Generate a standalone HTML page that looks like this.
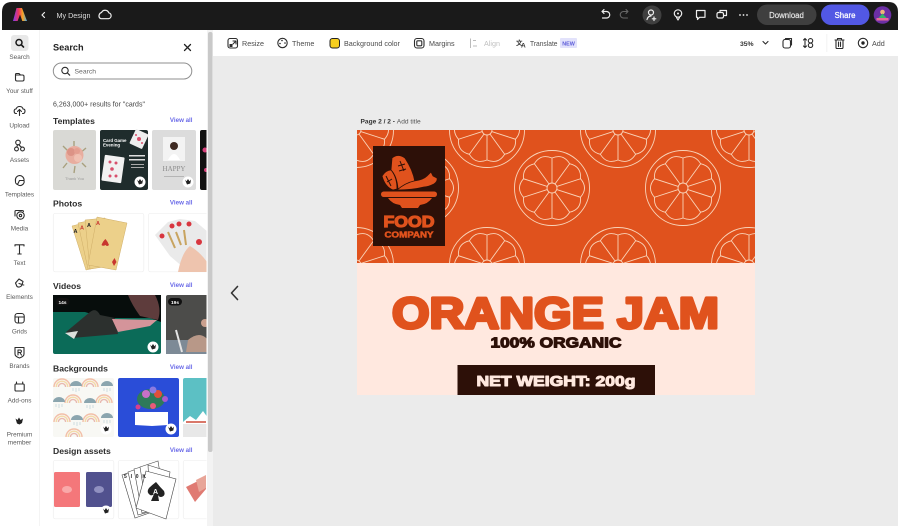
<!DOCTYPE html>
<html><head><meta charset="utf-8"><style>
html,body{margin:0;padding:0;background:#fff;width:900px;height:528px;overflow:hidden}
svg{display:block}
text{font-family:"Liberation Sans","Noto Sans CJK SC",sans-serif}
.nl{font-size:6.4px;fill:#5a5a5a;text-anchor:middle}
.h{font-size:8.6px;font-weight:bold;fill:#2c2c2c}
.va{font-size:6.2px;font-weight:bold;fill:#6a6ae8;text-anchor:end}
.tb{font-size:7.2px;fill:#4b4b4b}
.ic{fill:none;stroke:#2c2c2c;stroke-width:1.1;stroke-linecap:round;stroke-linejoin:round}
.wi{fill:none;stroke:#eee;stroke-width:1.2;stroke-linecap:round;stroke-linejoin:round}
</style></head><body>
<svg width="900" height="528" viewBox="0 0 900 528" xmlns="http://www.w3.org/2000/svg">
<defs>
<linearGradient id="ag" x1="0" y1="0" x2="1" y2="0"><stop offset="0" stop-color="#7b3df0"/><stop offset=".4" stop-color="#f0365f"/><stop offset=".7" stop-color="#f5a623"/><stop offset="1" stop-color="#4aa8f0"/></linearGradient>
<clipPath id="canvasTop"><rect x="357" y="130" width="398" height="133"/></clipPath>
<clipPath id="panel"><rect x="40" y="60" width="166.500" height="468"/></clipPath>
<path id="seg" d="M0-5V-30Q11.300-34.700 17.600-24.300"/>
<g id="or" fill="none" stroke="#f9d3b8" stroke-width=".9">
<circle r="37.500"/><circle r="5"/>
<use href="#seg"/><use href="#seg" transform="rotate(36)"/><use href="#seg" transform="rotate(72)"/><use href="#seg" transform="rotate(108)"/><use href="#seg" transform="rotate(144)"/><use href="#seg" transform="rotate(180)"/><use href="#seg" transform="rotate(216)"/><use href="#seg" transform="rotate(252)"/><use href="#seg" transform="rotate(288)"/><use href="#seg" transform="rotate(324)"/>
</g>
<g id="badge"><circle r="5.500" fill="#fff"/><path d="M-3-2.500L-1.500-.8L0-3L1.500-.8L3-2.500L2.300 1.500L-1 2.500Z" fill="#222"/></g>
<g id="umb"><path d="M-6 0A6 5 0 0 1 6 0Z" fill="#8ba5ae"/><path d="M-3 2V5M0 2V6M3 2V5" stroke="#bcd0d6" stroke-width=".7"/></g>
<g id="rb" fill="none" stroke-width="1.400"><path d="M-8 6A8 8 0 0 1 8 6" stroke="#f2bfa8"/><path d="M-5.800 6A5.800 5.800 0 0 1 5.800 6" stroke="#f4d9a8"/><path d="M-3.600 6A3.600 3.600 0 0 1 3.600 6" stroke="#e8b9b0"/></g>
</defs>

<rect width="900" height="528" fill="#fff"/>
<rect x="213" y="56" width="685" height="470" fill="#ebebeb"/>
<path d="M2 30V12Q2 2 12 2H888Q898 2 898 12V30Z" fill="#1a1a1a"/>
<!-- logo -->
<path d="M16.500 8H22L27 21H22.300L20 14.500L17.600 21H13Z" fill="url(#ag)"/>
<path d="M44.500 12.500L42 15L44.500 17.500" fill="none" stroke="#eee" stroke-width="1.200" stroke-linecap="round" stroke-linejoin="round"/>
<text x="56.500" y="17.800" font-size="7.200" fill="#ddd">My Design</text>
<path d="M101 18.700H108.500A3 3 0 0 0 108.800 12.800A4 4 0 0 0 101.500 12.500Q99.500 13 99 15.500Q98.800 18 101 18.700Z" class="wi" stroke-width="1"/>
<!-- top right -->
<path d="M602 11.500H606.500A3.200 3.200 0 0 1 606.500 18H602.500M602 11.500L604 9.500M602 11.500L604 13.500" class="wi"/>
<path d="M628 11.500H623.500A3.200 3.200 0 0 0 623.500 18H627.500M628 11.500L626 9.500M628 11.500L626 13.500" fill="none" stroke="#666" stroke-width="1.100" stroke-linecap="round" stroke-linejoin="round"/>
<circle cx="652" cy="15" r="9.500" fill="#3f3f3f"/>
<circle cx="651" cy="12.500" r="2.500" class="wi" stroke-width="1"/><path d="M647 19.500Q648 16 651 16M654 17V20.500M652.300 18.800H655.800" class="wi" stroke-width="1"/>
<circle cx="678" cy="13.500" r="3.700" class="wi" stroke-width="1.100"/><circle cx="678" cy="13.500" r="1" fill="#eee"/><path d="M676.500 17.500L678 20L679.500 17.500" class="wi" stroke-width="1"/>
<path d="M696.500 10.500H705V17.300H699.500L697.500 19.500V17.300H696.500Z" class="wi"/>
<rect x="717" y="12.500" width="6.500" height="5.500" rx="1.500" class="wi" stroke-width="1"/><path d="M720 12V10.500H726.500V15.500H724" class="wi" stroke-width="1"/>
<circle cx="740" cy="15" r=".9" fill="#eee"/><circle cx="743.500" cy="15" r=".9" fill="#eee"/><circle cx="747" cy="15" r=".9" fill="#eee"/>
<rect x="757" y="4.500" width="59.500" height="20.500" rx="10.200" fill="#3f3f3f"/>
<text x="786.500" y="17.800" font-size="7.800" fill="#e4e4e4" stroke="#e4e4e4" stroke-width=".2" text-anchor="middle">Download</text>
<rect x="821" y="4.500" width="48.500" height="20.500" rx="10.200" fill="#5258e4"/>
<text x="845" y="17.800" font-size="7.800" fill="#fff" stroke="#fff" stroke-width=".25" text-anchor="middle">Share</text>
<circle cx="882.500" cy="15" r="8.800" fill="#6c2fa5"/><circle cx="882.500" cy="12" r="2.300" fill="#f0b47a"/><path d="M877 19.500L882.500 13.500L888 19.500Z" fill="#35b56a"/><rect x="876.500" y="18" width="12" height="2.500" fill="#e86a9a"/>

<!-- left rail -->
<rect x="2" y="30" width="37.500" height="498" fill="#fff"/>
<rect x="39.300" y="30" width=".8" height="496" fill="#efefef"/>
<rect x="11" y="35" width="17.500" height="16" rx="3" fill="#e8e8e8"/>
<circle cx="19" cy="42.500" r="3" fill="none" stroke="#1a1a1a" stroke-width="1.500"/><path d="M21.200 44.700L23.500 47" stroke="#1a1a1a" stroke-width="1.600" stroke-linecap="round"/>
<text class="nl" x="19.500" y="59">Search</text>
<path d="M15.500 75V79.500Q15.500 81 17 81H22.500Q24 81 24 79.500V76.500Q24 75 22.500 75H15.500V74.500Q15.500 73.500 16.500 73.500H19L20.500 75" class="ic"/>
<text class="nl" x="19.500" y="93">Your stuff</text>
<path d="M16.500 113.500H15.500Q14 113 14.200 110.500Q14.500 109 16 109Q17 106.500 19.500 106.500Q22.500 106.500 23 109Q25 109 25 111Q25 113 23.500 113.500H22.500M19.500 115.500V110M17.500 111.500L19.500 109.500L21.500 111.500" class="ic"/>
<text class="nl" x="19.500" y="127.500">Upload</text>
<circle cx="18" cy="142.500" r="2.300" class="ic"/><circle cx="16.500" cy="149" r="1.900" class="ic"/><circle cx="22.500" cy="149" r="1.900" class="ic"/><path d="M18.700 144.700L21.500 147.300M17.500 144.800L16.800 147" class="ic"/>
<text class="nl" x="19.500" y="162">Assets</text>
<path d="M15.500 181A4.500 4.500 0 0 1 19.500 175.500A4.500 4.500 0 0 1 24 180.500A4 4 0 0 1 17.500 184.500A3 3 0 0 1 15.500 181ZM19.500 180.500L24 180.500M19.500 180.500L17.500 184.500" class="ic"/>
<text class="nl" x="19.500" y="196.500">Templates</text>
<path d="M15 216V211.500Q15 210.500 16 210.500H22Q23.500 210.500 23.500 211.500" class="ic"/><circle cx="20.500" cy="215.500" r="3.700" class="ic"/><circle cx="20.500" cy="215.500" r="1.200" class="ic"/>
<text class="nl" x="19.500" y="230.500">Media</text>
<path d="M15 246V244.800H24V246M19.500 244.800V254M17.800 254H21.200" class="ic"/>
<text class="nl" x="19.500" y="265">Text</text>
<path d="M15.500 283L19 279L23 281.500L22 285A3.500 3.500 0 0 1 17 286.500L15.500 283ZM19 283.500L23.800 285" class="ic"/>
<text class="nl" x="19.500" y="299">Elements</text>
<rect x="15" y="313.500" width="9.200" height="9.500" rx="2.500" class="ic"/><path d="M15 317H24.200M18.500 317V323" class="ic"/>
<text class="nl" x="19.500" y="333.500">Grids</text>
<path d="M15 347.500H24V354Q24 356.500 19.500 358Q15 356.500 15 354Z" class="ic"/><path d="M18 350V355M18 350H20.500A1.300 1.300 0 0 1 20.500 352.500H18M19.800 352.500L21.500 355" class="ic" stroke-width=".9"/>
<text class="nl" x="19.500" y="368">Brands</text>
<rect x="15" y="384" width="9.200" height="7" rx="1" class="ic"/><path d="M16.500 384V382M22.700 384V382" class="ic"/>
<text class="nl" x="19.500" y="402.500">Add-ons</text>
<path d="M15.500 418.500L17.500 420L19 417.500L20.500 420L23 418.500L22 423L19.500 424.500L17 423.500Z" fill="#222"/>
<text class="nl" x="19.500" y="436.500">Premium</text><text class="nl" x="19.500" y="444.500">member</text>

<!-- panel -->
<rect x="40" y="30" width="167" height="496" fill="#fff"/>
<rect x="207" y="30" width="6" height="496" fill="#f3f3f3"/>
<rect x="208" y="32" width="4.500" height="420" rx="2" fill="#c9c9c9"/>
<text x="53" y="50.300" font-size="9.200" font-weight="bold" fill="#222">Search</text>
<path d="M184.500 44.500L190.500 50.500M190.500 44.500L184.500 50.500" stroke="#222" stroke-width="1.300" stroke-linecap="round"/>
<rect x="53.300" y="63" width="138.500" height="16" rx="8" fill="#fff" stroke="#8f8f8f" stroke-width="1"/>
<circle cx="65" cy="70.500" r="3.200" class="ic"/><path d="M67.300 72.800L69.700 75.200" class="ic"/>
<text x="74.500" y="73.500" font-size="6.800" fill="#666">Search</text>
<text x="53" y="106.500" font-size="7" fill="#444">6,263,000+ results for "cards"</text>

<text class="h" x="53" y="124">Templates</text><text class="va" x="192.500" y="122">View all</text>
<text class="h" x="53" y="206.500">Photos</text><text class="va" x="192.500" y="204.500">View all</text>
<text class="h" x="53" y="289">Videos</text><text class="va" x="192.500" y="287">View all</text>
<text class="h" x="53" y="371.500">Backgrounds</text><text class="va" x="192.500" y="369">View all</text>
<text class="h" x="53" y="454">Design assets</text><text class="va" x="192.500" y="452">View all</text>

<g clip-path="url(#panel)">
<!-- templates -->
<rect x="53" y="130" width="43" height="60" rx="2" fill="#d9d9d5"/>
<path d="M63 146L70 153M86 148L79 154M67 163L63 168M75 166L74 173M82 163L86 167M74 146V141" stroke="#a8a07e" stroke-width="1.400"/>
<circle cx="74.500" cy="155" r="9" fill="#e8ad9f"/><circle cx="71" cy="152" r="4" fill="#dc9386"/><circle cx="78" cy="158" r="4" fill="#f0c0b2"/><circle cx="77" cy="151" r="3" fill="#e49e90"/>
<text x="74.500" y="180" font-size="4" fill="#999" text-anchor="middle">Thank You</text>
<rect x="100" y="130" width="48" height="60" rx="2" fill="#1f2c2c"/>
<text x="103" y="142" font-size="4.400" font-weight="bold" fill="#fff">Card Game</text><text x="103" y="146.500" font-size="4.400" font-weight="bold" fill="#fff">Evening</text>
<rect x="132" y="131" width="14" height="16" rx="1" fill="#eee" transform="rotate(25 139 139)"/><circle cx="139" cy="139" r="2" fill="#d8506c"/><circle cx="136" cy="135" r="1" fill="#d8506c"/><circle cx="142" cy="143" r="1" fill="#d8506c"/>
<rect x="103" y="156" width="20" height="26" rx="1" fill="#f1f1f1" transform="rotate(8 113 169)"/>
<circle cx="110" cy="162" r="1.500" fill="#d8506c"/><circle cx="116" cy="163" r="1.500" fill="#d8506c"/><circle cx="112" cy="169" r="1.800" fill="#d8506c"/><circle cx="110" cy="176" r="1.500" fill="#d8506c"/><circle cx="116" cy="176" r="1.500" fill="#d8506c"/>
<rect x="129" y="155" width="16" height="1.500" fill="#ddd"/><rect x="129" y="159" width="16" height="1.500" fill="#ddd"/><rect x="131" y="164" width="13" height="1" fill="#aaa"/><rect x="131" y="167" width="13" height="1" fill="#aaa"/>
<use href="#badge" x="140" y="182"/>
<rect x="152" y="130" width="44" height="60" rx="2" fill="#dcdcdc"/>
<rect x="163" y="137" width="22" height="24" fill="#f3f3f3"/><circle cx="174" cy="146" r="4" fill="#3e2a22"/><path d="M168 160Q174 148 180 160Z" fill="#fff"/>
<text x="174" y="171" font-size="7" fill="#8c8c8c" text-anchor="middle" style="font-family:'Liberation Serif',serif">HAPPY</text>
<rect x="164" y="176" width="20" height="1" fill="#b5b5b5"/>
<use href="#badge" x="188" y="182"/>
<rect x="200" y="130" width="8" height="60" rx="2" fill="#111"/><circle cx="205" cy="150" r="2.500" fill="#d6407a"/><circle cx="206" cy="170" r="2" fill="#d6407a"/>

<!-- photos -->
<rect x="53.300" y="213.300" width="90.500" height="58.500" rx="2" fill="#fff" stroke="#efefef" stroke-width=".7"/>
<g fill="#ecd08a" stroke="#cfae68" stroke-width=".5">
<path d="M72 226L92 221L104 266L86 270Z"/><path d="M78 223L98 219L107 266L88 269Z"/><path d="M85 220L105 218L110 266L90 269Z"/><path d="M97 217L127 223L116 270L88 265Z"/></g>
<text x="73.500" y="233" font-size="5.500" font-weight="bold" fill="#222">A</text><text x="80" y="229.500" font-size="5.500" font-weight="bold" fill="#c8362f">A</text><text x="87" y="227" font-size="5.500" font-weight="bold" fill="#222">A</text><text x="96" y="225" font-size="5.500" font-weight="bold" fill="#c8362f">A</text>
<path d="M105.500 239Q108 242 109 245Q107 247 105.500 245Q103 246.500 101.500 245Q103 241 105.500 239Z" fill="#c8362f"/><path d="M114.500 258L116.500 262L114 266L112 262Z" fill="#c8362f"/>
<rect x="148.500" y="213.300" width="60" height="58.500" rx="2" fill="#fff" stroke="#efefef" stroke-width=".7"/>
<path d="M155 235L168 222L180 219L195 221L208 232V262L184 268L170 256Z" fill="#eaeaea"/>
<circle cx="162" cy="236" r="2.500" fill="#d8363f"/><circle cx="172" cy="226" r="2.500" fill="#d8363f"/><circle cx="179" cy="224" r="2.500" fill="#d8363f"/><circle cx="189" cy="224" r="2.500" fill="#d8363f"/><circle cx="199" cy="242" r="3" fill="#d8363f"/>
<path d="M168 232L175 248M176 232L181 245M184 230L186 245" stroke="#c8a460" stroke-width="2"/>
<path d="M178 272Q182 252 190 246Q200 252 207 262V272Z" fill="#eec4ae"/>

<!-- videos -->
<rect x="53" y="295" width="108" height="59" rx="2" fill="#0b6b58"/>
<path d="M53 295H161V322L150 318H105L85 312L53 312Z" fill="#070d0c"/>
<path d="M128 295H155Q162 308 158 320L140 316Q132 305 128 295Z" fill="#5e3c3c"/>
<path d="M66 332L90 312Q96 307 100 315L115 318L118 334L72 338Z" fill="#2c302e"/><path d="M65 333L78 331L74 339Z" fill="#dce0dc"/><path d="M112 319L157 320L150 326L118 332Z" fill="#d4949a"/>
<rect x="55.500" y="298" width="14" height="7.500" rx="3.700" fill="#111"/><text x="62.500" y="303.800" font-size="4.800" font-weight="bold" fill="#fff" text-anchor="middle">14s</text>
<use href="#badge" x="153" y="347"/>
<rect x="166" y="295" width="44" height="59" rx="2" fill="#4c4c4a"/><rect x="166" y="340" width="44" height="14" fill="#7d8a96"/><path d="M176 330L182 352" stroke="#e4e4e4" stroke-width="2"/><path d="M188 340Q200 330 208 340V352H186Z" fill="#b89888"/><circle cx="205" cy="323" r="4" fill="#caa08e"/>
<rect x="168" y="298" width="14" height="7.500" rx="3.700" fill="#111"/><text x="175" y="303.800" font-size="4.800" font-weight="bold" fill="#fff" text-anchor="middle">19s</text>

<!-- backgrounds -->
<rect x="53" y="378" width="61" height="59" rx="2" fill="#f8f8f4"/>
<use href="#rb" x="62" y="381"/><use href="#rb" x="90" y="381"/><use href="#rb" x="73" y="397"/><use href="#rb" x="104" y="397"/><use href="#rb" x="62" y="416"/><use href="#rb" x="91" y="416"/><use href="#rb" x="74" y="431"/>
<use href="#umb" x="76" y="386"/><use href="#umb" x="107" y="386"/><use href="#umb" x="59" y="402"/><use href="#umb" x="90" y="403"/><use href="#umb" x="77" y="420"/><use href="#umb" x="107" y="418"/>
<use href="#badge" x="106" y="429"/>
<rect x="118" y="378" width="61" height="59" rx="2" fill="#2a4dd8"/>
<path d="M135 412H168V425L152 426L135 425Z" fill="#fff"/>
<ellipse cx="151" cy="399" rx="14" ry="10" fill="#2e7a5a"/>
<circle cx="146" cy="394" r="4" fill="#c870c8"/><circle cx="158" cy="394" r="4" fill="#e0503a"/><circle cx="153" cy="390" r="3.500" fill="#8c7ae0"/><circle cx="138" cy="407" r="2.500" fill="#d8408c"/><circle cx="153" cy="406" r="3" fill="#e85a7a"/><circle cx="165" cy="399" r="3" fill="#a85ad0"/>
<use href="#badge" x="171" y="429"/>
<rect x="183" y="378" width="26" height="59" rx="2" fill="#5cc0c4"/><rect x="183" y="424" width="26" height="13" fill="#e8e8e8"/><path d="M183 422L190 416L196 420L203 411L208 418V424H183Z" fill="#fff"/><path d="M186 422H206" stroke="#d9786a" stroke-width="2"/>

<!-- assets -->
<rect x="53.300" y="460.300" width="60.500" height="58.500" rx="2" fill="#fff" stroke="#efefef" stroke-width=".7"/>
<rect x="54" y="472" width="26" height="35" rx="1.500" fill="#f4777a"/><ellipse cx="67" cy="489.500" rx="5" ry="3.500" fill="#f9a9a9"/>
<rect x="86" y="472" width="26" height="35" rx="1.500" fill="#51518e"/><ellipse cx="99" cy="489.500" rx="5" ry="3.500" fill="#9090c0"/>
<use href="#badge" x="106" y="511"/>
<rect x="118.300" y="460.300" width="60.500" height="58.500" rx="2" fill="#fff" stroke="#efefef" stroke-width=".7"/>
<g fill="#fff" stroke="#444" stroke-width=".6">
<path d="M122 475L140 469L152 512L135 518Z"/><path d="M128 472L146 466L156 510L138 515Z"/><path d="M134 469L152 464L160 508L142 513Z"/><path d="M140 467L158 461L165 505L147 511Z"/><path d="M148 465L170 472L165 505L150 500Z"/>
<path d="M146 471L176 479L166 519L136 508Z"/></g>
<path d="M156 482Q160 487 164 491Q166 496 161 497Q159 497 158 495L159 501H151L154 494Q152 496 150 495Q146 492 149 488Q152 485 156 482Z" fill="#222"/>
<text x="153" y="494" font-size="7" font-weight="bold" fill="#fff">A</text>
<text x="124" y="478" font-size="5" font-weight="bold" fill="#222" textLength="22">5 I 0 K</text>
<rect x="183.300" y="460.300" width="30" height="58.500" rx="2" fill="#fff" stroke="#efefef" stroke-width=".7"/>
<path d="M186 487L206 477V489L195 502Z" fill="#e07a72"/><path d="M196 480L206 475V488L199 492Z" fill="#e8a598"/>
</g>

<!-- toolbar -->
<rect x="213" y="30" width="685" height="26" fill="#fff"/>
<rect x="228" y="38.500" width="9.500" height="9.500" rx="2" class="ic"/><path d="M233 41H236V44M236 41L233 44" class="ic" stroke-width=".8"/><rect x="229.500" y="44" width="3" height="3" fill="#2c2c2c"/>
<text class="tb" x="242" y="45.800">Resize</text>
<circle cx="282.500" cy="43" r="4.700" class="ic"/><circle cx="282" cy="40.500" r=".8" fill="#222"/><circle cx="285" cy="43" r=".8" fill="#222"/><circle cx="280" cy="43.500" r=".8" fill="#222"/>
<text class="tb" x="292" y="45.800">Theme</text>
<rect x="330" y="38.500" width="9.500" height="9.500" rx="2.500" fill="#f7cf1f" stroke="#222" stroke-width="1"/>
<text class="tb" x="344" y="45.800">Background color</text>
<rect x="414.500" y="38.500" width="9.500" height="9.500" rx="2.500" class="ic"/><rect x="416.800" y="40.800" width="5" height="5" rx="1" class="ic"/>
<text class="tb" x="429" y="45.800">Margins</text>
<path d="M470.500 38.500V48M473 40.500H476M473 46H477" fill="none" stroke="#bbb" stroke-width="1"/>
<text x="484" y="45.800" font-size="7.200" fill="#c0c0c0">Align</text>
<text x="516" y="45" font-size="6.500" font-weight="bold" fill="#333">文</text><text x="521" y="47.500" font-size="6.500" font-weight="bold" fill="#333">A</text>
<text x="530" y="45.800" class="tb" textLength="27.500" lengthAdjust="spacingAndGlyphs">Translate</text>
<rect x="560" y="38" width="17" height="10" rx="1" fill="#e2e2fb"/><text x="568.500" y="45.300" font-size="5.400" font-weight="bold" fill="#5a5ad8" text-anchor="middle">NEW</text>
<text x="740" y="46" font-size="6.800" font-weight="bold" fill="#333">35%</text>
<path d="M763 41.500L765.500 44L768 41.500" class="ic"/>
<rect x="783" y="39.500" width="7.500" height="8.500" rx="2" class="ic"/><path d="M785.500 39.500V38.500H791.500V45H790.500" class="ic"/>
<path d="M805 38.500V47.500M803.500 40L805 38.500L806.500 40M803.500 46L805 47.500L806.500 46" class="ic" stroke-width=".9"/><circle cx="810.500" cy="40.800" r="2.200" class="ic"/><circle cx="810.500" cy="45.300" r="2.200" class="ic"/>
<rect x="826.500" y="34" width=".7" height="18" fill="#ececec"/>
<path d="M835 40H844M836 40V47.500Q836 48.500 837 48.500H842Q843 48.500 843 47.500V40M837.500 40V38.500H841.500V40M838.500 42V46.500M840.500 42V46.500" class="ic"/>
<circle cx="863" cy="43" r="4.700" class="ic"/><circle cx="863" cy="43" r="1.700" fill="#222"/>
<text class="tb" x="872" y="45.800">Add</text>

<!-- canvas -->
<path d="M237.500 286.500L231.500 293L237.500 299.500" fill="none" stroke="#333" stroke-width="1.600" stroke-linecap="round" stroke-linejoin="round"/>
<text x="360.500" y="123.500" font-size="6.600"><tspan font-weight="bold" fill="#333">Page 2 / 2 - </tspan><tspan fill="#555">Add title</tspan></text>
<rect x="357" y="263" width="398" height="132" fill="#ffe8df"/>
<rect x="357" y="130" width="398" height="133" fill="#e0521d"/>
<g clip-path="url(#canvasTop)">
<use href="#or" x="356" y="130"/><use href="#or" x="487" y="130"/><use href="#or" x="618" y="130"/><use href="#or" x="749" y="130"/>
<use href="#or" x="421" y="188"/><use href="#or" x="552" y="188"/><use href="#or" x="683" y="188"/>
<use href="#or" x="356" y="265"/><use href="#or" x="487" y="265"/><use href="#or" x="618" y="265"/><use href="#or" x="749" y="265"/>
</g>
<!-- food logo -->
<rect x="373" y="146" width="72" height="100" fill="#2d1008"/>
<g fill="#e0521d" stroke="#2d1008" stroke-width=".8">
<path d="M392 158Q398 153 405 158Q413 170 415 182L398 189Q397 176 391 170Z"/>
<path d="M382 176Q386 170 391 170Q397 177 397 189L393 190Q385 187 382 176Z"/>
<path d="M397 190Q405 183 414 181Q423 180 427 176L431 172L433 176L437 178Q438 181 434 184Q428 187 424 187Q412 190 397 190Z"/>
<rect x="381" y="191.500" width="56" height="5.500" rx="2.700" stroke="none"/>
<path d="M388 198H432Q428 204 420 205L418 208H402L400 205Q392 204 388 198Z" stroke="none"/>
</g>
<path d="M400 161L404 171M398 166L405 164M399 171L406 169M386 176L391 186M387 182L392 179" stroke="#2d1008" stroke-width="1" fill="none"/>
<text x="383.500" y="227" font-size="16" font-weight="bold" fill="#e0521d" stroke="#e0521d" stroke-width="1.200" textLength="51" lengthAdjust="spacingAndGlyphs">FOOD</text>
<text x="384.500" y="237.300" font-size="7.800" font-weight="bold" fill="#e0521d" stroke="#e0521d" stroke-width=".5" textLength="49" lengthAdjust="spacingAndGlyphs">COMPANY</text>
<!-- titles -->
<text x="392" y="328" font-size="44" font-weight="bold" fill="#e0521d" stroke="#e0521d" stroke-width="3.200" stroke-linejoin="round" textLength="327" lengthAdjust="spacingAndGlyphs">ORANGE JAM</text>
<text x="490.500" y="347.500" font-size="15" font-weight="bold" fill="#2d1008" stroke="#2d1008" stroke-width="1.100" stroke-linejoin="round" textLength="131" lengthAdjust="spacingAndGlyphs">100% ORGANIC</text>
<rect x="457.500" y="365" width="197.500" height="30" fill="#2d1008"/>
<text x="476.500" y="386" font-size="14.500" font-weight="bold" fill="#ffe8df" stroke="#ffe8df" stroke-width="1" stroke-linejoin="round" textLength="159" lengthAdjust="spacingAndGlyphs">NET WEIGHT: 200g</text>
</svg>
</body></html>
